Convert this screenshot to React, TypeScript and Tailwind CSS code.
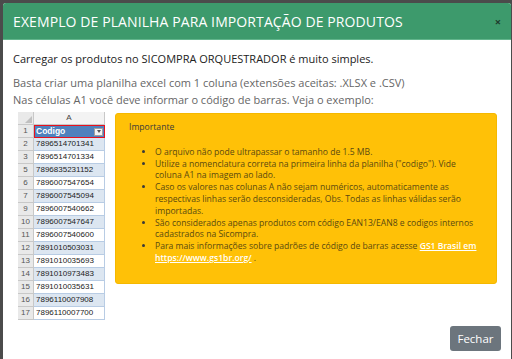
import React from "react";

const rows: [string, string][] = [
  ["2", "7896514701341"],
  ["3", "7896514701334"],
  ["5", "7896835231152"],
  ["6", "7896007547654"],
  ["7", "7896007545094"],
  ["9", "7896007540662"],
  ["10", "7896007547647"],
  ["11", "7896007540600"],
  ["12", "7891010503031"],
  ["13", "7891010035693"],
  ["14", "7891010973483"],
  ["15", "7891010035631"],
  ["16", "7896110007908"],
  ["17", "7896110007700"],
];

function Planilha() {
  return (
    <div className="w-[87px] shrink-0 font-['Liberation_Sans',Arial,sans-serif] text-[8px] leading-none">
      {/* cabeçalho da coluna */}
      <div className="flex h-[13px]">
        <div className="relative w-[16px] bg-[#e9e9e9] border-r border-b border-[#c8c8c8]">
          <div className="absolute right-[1px] bottom-[1px] w-0 h-0 border-l-[7px] border-l-transparent border-b-[7px] border-b-[#c0c0c0]" />
        </div>
        <div className="flex-1 flex items-center justify-center bg-[#f3f3f3] border-b border-r border-[#c8c8c8] text-[#444]">
          A
        </div>
      </div>
      {/* linha 1 */}
      <div className="flex h-[13px]">
        <div className="w-[16px] flex items-center justify-center bg-[#e9e9e9] border-r border-b border-[#c8c8c8] text-[#555]">1</div>
        <div className="flex-1 flex items-center justify-between bg-[#4f81bd] border-[1.5px] border-[#e8101c] text-white font-bold text-[8.5px] pl-[1px] pr-[1px]">
          <span>Codigo</span>
          <span className="w-[9px] h-[8px] bg-[#f4f4f4] border border-[#a0a0a0] flex items-center justify-center">
            <span className="w-0 h-0 border-l-[2.5px] border-r-[2.5px] border-t-[3px] border-l-transparent border-r-transparent border-t-[#555]" />
          </span>
        </div>
      </div>
      {rows.map(([n, code], i) => (
        <div key={n} className="flex h-[13px]">
          <div className="w-[16px] flex items-center justify-center bg-[#e9e9e9] border-r border-b border-[#c8c8c8] text-[#555]">{n}</div>
          <div
            className={
              "flex-1 flex items-center pl-[2px] border-r border-b text-[#222] " +
              (i % 2 === 0 ? "bg-[#dce6f1] border-[#b8cce4]" : "bg-white border-[#b8cce4]")
            }
          >
            {code}
          </div>
        </div>
      ))}
    </div>
  );
}

function Importante() {
  return (
    <div className="flex-1 h-[171px] bg-[#ffc107] border border-[#f5b800] rounded-[3px] pl-[13px] pr-[16px] pt-[8px] text-[8.6px] leading-[11.8px] text-[#5a4a10]">
      <p className="text-[#3a3a3a] mb-[13px]">Importante</p>
      <ul className="list-disc pl-[26px] marker:text-[#3a3a3a]">
        <li>O arquivo não pode ultrapassar o tamanho de 1.5 MB.</li>
        <li>Utilize a nomenclatura correta na primeira linha da planilha ("codigo"). Vide coluna A1 na imagem ao lado.</li>
        <li>Caso os valores nas colunas A não sejam numéricos, automaticamente as respectivas linhas serão desconsideradas, Obs. Todas as linhas válidas serão importadas.</li>
        <li>São considerados apenas produtos com código EAN13/EAN8 e codigos internos cadastrados na Sicompra.</li>
        <li>
          Para mais informações sobre padrões de código de barras acesse{" "}
          <a className="text-white font-semibold underline">GS1 Brasil em https://www.gs1br.org/</a> .
        </li>
      </ul>
    </div>
  );
}

export default function App() {
  return (
    <div className="w-[512px] h-[359px] overflow-hidden bg-[#4b4b4b] pt-[3px] pl-[3px] pr-[1px] font-['Open_Sans',sans-serif]">
      <div className="h-full bg-white rounded-t-[3px] flex flex-col">
        {/* Cabeçalho verde */}
        <div className="h-[37px] shrink-0 bg-[#3d9a6c] border-b border-[#62b58c] rounded-t-[3px] flex items-center justify-between pl-[10px] pr-[10px]">
          <h1 className="text-white text-[14px] tracking-[0.1px]">EXEMPLO DE PLANILHA PARA IMPORTAÇÃO DE PRODUTOS</h1>
          <span className="text-[#1e3a2c] text-[11px] font-bold leading-none">×</span>
        </div>

        {/* Corpo */}
        <div className="flex-1 flex flex-col pl-[10px] pr-[10px] pt-[10px]">
          <p className="text-[11px] text-[#222] leading-[17px]">Carregar os produtos no SICOMPRA ORQUESTRADOR é muito simples.</p>
          <p className="text-[11px] text-[#666] leading-[17px] mt-[7px]">Basta criar uma planilha excel com 1 coluna (extensões aceitas: .XLSX e .CSV)</p>
          <p className="text-[11px] text-[#666] leading-[17px]">Nas células A1 você deve informar o código de barras. Veja o exemplo:</p>

          <div className="flex items-start gap-[10px] pl-[5px] pr-[4px] mt-[4px]">
            <Planilha />
            <div className="flex-1 pt-[1px] flex">
              <Importante />
            </div>
          </div>

          <div className="flex justify-end mt-auto mb-[8px]">
            <button className="w-[51px] h-[25px] bg-[#6c757d] rounded-[3px] text-white text-[11.5px]">Fechar</button>
          </div>
        </div>
      </div>
    </div>
  );
}
